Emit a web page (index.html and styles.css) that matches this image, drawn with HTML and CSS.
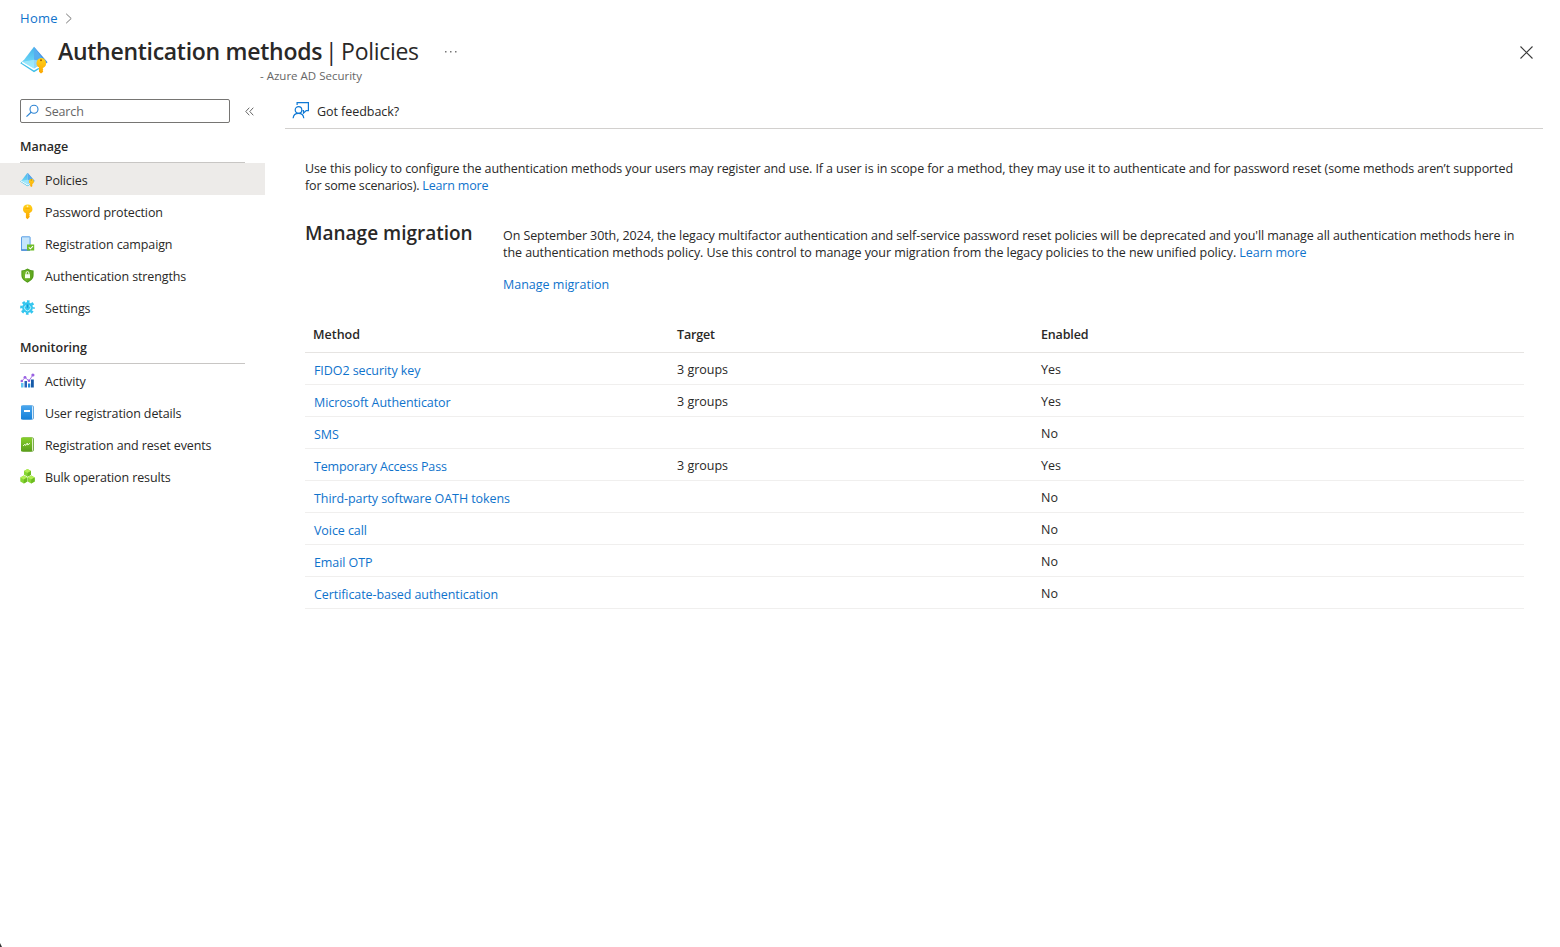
FILE: index.html
```html
<!DOCTYPE html>
<html lang="en">
<head>
<meta charset="utf-8">
<title>Authentication methods | Policies</title>
<link rel="stylesheet" href="styles.css">
</head>
<body>
<svg class="defs" width="0" height="0" aria-hidden="true">
  <defs>
    <linearGradient id="pyr" x1="0" y1="0" x2="0" y2="1"><stop offset="0" stop-color="#45b3ea"/><stop offset="1" stop-color="#7be4fb"/></linearGradient>
    <linearGradient id="gold" x1="0" y1="0" x2="0" y2="1"><stop offset="0" stop-color="#ffd21c"/><stop offset="1" stop-color="#fba500"/></linearGradient>
    <linearGradient id="blue" x1="0" y1="0" x2="0" y2="1"><stop offset="0" stop-color="#4aa7ee"/><stop offset="1" stop-color="#1580d8"/></linearGradient>
    <linearGradient id="green" x1="0" y1="0" x2="0" y2="1"><stop offset="0" stop-color="#86cf2a"/><stop offset="1" stop-color="#5a9e1a"/></linearGradient>
    <symbol id="pyramid" viewBox="0 0 28 28">
      <path d="M3.500 14.200.3 17.300 14 26.200l6-3.800-6-1.400z" fill="#3fbfe9"/>
      <path d="M3 14.500 1.800 17 14 24.600l6-3.700-6-1z" fill="#fff"/>
      <path d="M14 .8 27.600 16.300 21 21z" fill="#3f8fe3"/>
      <path d="M14 .8 2.600 15.800 14 22.600z" fill="url(#pyr)"/>
      <path d="M14 .8 25 15.800 14 22.600z" fill="#57aeee"/>
      <path d="M2.600 15.800 14 13.800l11 2-11 6.800z" fill="#b9f1fd" opacity=".6"/>
      <path d="M21 12a5.200 5.200 0 0 1 2.300 9.800l-.6 1 .6 1-.6 1 .6 1L21 27.500l-2-1.700v-4.200A5.200 5.200 0 0 1 21 12z" fill="url(#gold)"/>
      <circle cx="21" cy="14.200" r="1" fill="#a66700"/>
    </symbol>
  </defs>
</svg>
<nav class="crumb"><a href="#">Home</a>
  <svg width="8" height="11" viewBox="0 0 8 11"><path d="M1.200.8 6.200 5.500 1.200 10.200" fill="none" stroke="#777" stroke-width="1"/></svg>
</nav>
<header class="head">
  <svg class="head-icon" width="28" height="28"><use href="#pyramid"/></svg>
  <div class="titles">
    <h1><b>Authentication methods</b><span class="page">| Policies</span></h1>
    <p class="sub">- Azure AD Security</p>
  </div>
  <svg class="dots" width="12" height="4" viewBox="0 0 12 4"><path d="M0 1h1.500v1.500H0zM5 1h1.500v1.500H5zM10 1h1.500v1.500H10z" fill="#777"/></svg>
  <svg class="close" width="13" height="13" viewBox="0 0 13 13"><path d="M.5.5l12 12M12.500.500l-12 12" fill="none" stroke="#3a3a3a" stroke-width="1.100"/></svg>
</header>
<div class="body">
  <aside class="side">
    <div class="searchrow">
      <div class="search">
        <svg width="14" height="14" viewBox="0 0 14 14"><circle cx="8" cy="5.300" r="4" fill="none" stroke="#2b83d3" stroke-width="1.100"/><path d="M5.100 8.200.5 12.600" stroke="#2b83d3" stroke-width="1.200"/></svg>
        <span>Search</span>
      </div>
      <svg width="9" height="9" viewBox="0 0 9 9"><path d="M4.300.7.8 4.500l3.500 3.800M8.300.7 4.800 4.500l3.500 3.800" fill="none" stroke="#666"/></svg>
    </div>
    <h2 class="group">Manage</h2>
    <ul class="menu">
      <li class="on"><svg width="16" height="16" viewBox="0 0 16 16"><use href="#pyramid" x="0" y=".3" width="15" height="15"/></svg><span>Policies</span></li>
      <li><svg width="16" height="16" viewBox="0 0 16 16"><path d="M7.500.500a4.500 4.500 0 0 1 2.200 8.600l-.5.700.6.900-.6.900.6.900-.6.900-1.700 1.900-1.600-1.500V9.200A4.500 4.500 0 0 1 7.500.5z" fill="url(#gold)"/><path d="M5.400 4.400h4.200" stroke="#f8b000"/><circle cx="7.500" cy="2.300" r=".9" fill="#fff2c0"/></svg><span>Password protection</span></li>
      <li><svg width="16" height="16" viewBox="0 0 16 16"><rect x="1.500" y=".8" width="8.600" height="13.400" rx=".5" fill="#c5e5fb" stroke="#5a9ee5"/><path d="M1 14h9" stroke="#4285d4" stroke-width="1.300"/><rect x="7" y="8.500" width="7.200" height="6" fill="#6fbd28"/><path d="M8.800 11.300l1.600 1.500 2.600-2.600" fill="none" stroke="#fff" stroke-width="1.100"/></svg><span>Registration campaign</span></li>
      <li><svg width="16" height="16" viewBox="0 0 16 16"><path d="M7.500.500C9.500 1.900 11.300 2.300 13.600 2.400V7c0 4-3 6-6.100 7.700C4.400 13 1.400 11 1.400 7V2.400C3.700 2.300 5.500 1.900 7.500.5z" fill="#4f9a18"/><path d="M7.500 1.600c1.700 1.100 3.300 1.500 5.100 1.600V7c0 3.300-2.500 5.100-5.100 6.600z" fill="#62a820"/><path d="M7.500 1.600C5.800 2.700 4.200 3.100 2.400 3.200V7c0 3.300 2.500 5.100 5.100 6.600z" fill="#6fb526"/><rect x="5" y="6.200" width="5" height="4" fill="#f7fff0"/><path d="M6.100 6.400V5a1.400 1.400 0 0 1 2.800 0v1.400" fill="none" stroke="#f7fff0"/></svg><span>Authentication strengths</span></li>
      <li><svg width="16" height="16" viewBox="0 0 16 16"><circle cx="7.500" cy="7.500" r="6.100" fill="none" stroke="#32c5ee" stroke-width="2.400" stroke-dasharray="2.600 2.191" stroke-dashoffset="1.300"/><circle cx="7.500" cy="7.500" r="5.400" fill="#32c5ee"/><path d="M5.500 5.500a3 3 0 1 0 4 0" fill="none" stroke="#c6f4ff"/><path d="M7.500 4.500v3.200" stroke="#1793d2" stroke-width="1.300"/></svg><span>Settings</span></li>
    </ul>
    <h2 class="group">Monitoring</h2>
    <ul class="menu">
      <li><svg width="16" height="16" viewBox="0 0 16 16"><path d="M1 10h2.500v4.500H1z" fill="#60c5f2"/><path d="M4.500 8H7v6.500H4.500z" fill="#2a62b9"/><path d="M8 10.500h2.300v4H8z" fill="#2388d8"/><path d="M11 6.500h2.800v8H11z" fill="#155aa8"/><path d="M1.800 8.200 5 4.500l4 3.300 3.800-5.600" fill="none" stroke="#a878e8"/><g fill="#9a62e2"><circle cx="1.800" cy="8" r="1.300"/><circle cx="5" cy="4.300" r="1.400"/><circle cx="9" cy="7.800" r="1.300"/><circle cx="12.900" cy="2" r="1.600"/></g></svg><span>Activity</span></li>
      <li><svg width="16" height="16" viewBox="0 0 16 16"><rect x="2" y=".8" width="11.500" height="13.400" rx="1" fill="#d8ebfa" stroke="#6aa9dd"/><rect x="1" y=".5" width="11" height="14" rx=".8" fill="url(#blue)"/><path d="M4 5h6v2H4z" fill="#fff"/></svg><span>User registration details</span></li>
      <li><svg width="16" height="16" viewBox="0 0 16 16"><rect x="2" y=".8" width="11.500" height="13.400" rx="1" fill="#dff0c8" stroke="#7cae4e"/><rect x="1" y=".5" width="11" height="14" rx=".8" fill="url(#green)"/><path d="M3 9l2-1.800.6 1.300L7.300 6l.5 2L10 6.200" fill="none" stroke="#e9fbd2"/></svg><span>Registration and reset events</span></li>
      <li><svg width="16" height="16" viewBox="0 0 16 16"><g id="cube"><path d="M7.500 0 11 2v3.800L7.500 7.800 4 5.800V2z" fill="#86d633"/><path d="M4 2l3.500 2L11 2 7.500 0z" fill="#b2ee52"/><path d="M7.500 4 11 2v3.800l-3.500 2z" fill="#6cbb20"/></g><use href="#cube" x="-3.700" y="6.600"/><use href="#cube" x="3.700" y="6.600"/></svg><span>Bulk operation results</span></li>
    </ul>
  </aside>
  <main class="main">
    <div class="toolbar">
      <svg width="17" height="17" viewBox="0 0 17 17"><g fill="none" stroke="#0f78d4" stroke-width="1.200"><circle cx="6.500" cy="8" r="3.300"/><path d="M1.100 16.200c.3-3 2.400-4.900 5.400-4.900s5 1.900 5.300 4.900"/><path d="M5.100 3V.6h11.300v8h-2.200l-2.700 2.600V8.600h-1"/></g></svg>
      <span>Got feedback?</span>
    </div>
    <div class="content">
      <p class="intro">Use this policy to configure the authentication methods your users may register and use. If a user is in scope for a method, they may use it to authenticate and for password reset (some methods aren’t supported<br><span class="second-intro">for some scenarios). <a href="#">Learn more</a></span></p>
      <section class="mig">
        <h3>Manage migration</h3>
        <div class="migtext">
          <p>On September 30th, 2024, the legacy multifactor authentication and self-service password reset policies will be deprecated and you'll manage all authentication methods here in<br><span class="second">the authentication methods policy. Use this control to manage your migration from the legacy policies to the new unified policy. <a href="#">Learn more</a></span></p>
          <p class="miglink"><a href="#">Manage migration</a></p>
        </div>
      </section>
      <table>
        <thead><tr><th>Method</th><th>Target</th><th>Enabled</th></tr></thead>
        <tbody>
          <tr><td><a href="#">FIDO2 security key</a></td><td>3 groups</td><td>Yes</td></tr>
          <tr><td><a href="#">Microsoft Authenticator</a></td><td>3 groups</td><td>Yes</td></tr>
          <tr><td><a href="#">SMS</a></td><td></td><td>No</td></tr>
          <tr><td><a href="#" class="tight">Temporary Access Pass</a></td><td>3 groups</td><td>Yes</td></tr>
          <tr><td><a href="#">Third-party software OATH tokens</a></td><td></td><td>No</td></tr>
          <tr><td><a href="#">Voice call</a></td><td></td><td>No</td></tr>
          <tr><td><a href="#">Email OTP</a></td><td></td><td>No</td></tr>
          <tr><td><a href="#">Certificate-based authentication</a></td><td></td><td>No</td></tr>
        </tbody>
      </table>
    </div>
  </main>
</div>
<svg class="corner" width="2" height="4" viewBox="0 0 2 4"><path d="M0 0 2 4H0z" fill="#333"/></svg>
</body>
</html>
```
FILE: styles.css
```css
* { box-sizing: border-box; }
body { margin: 0; height: 947px; background: #fff; color: #292827; font: 12.5px/17px "Open Sans", "Noto Sans", sans-serif; }
h1, h2, h3, p, ul { margin: 0; padding: 0; }
ul { list-style: none; }
svg { display: block; flex: none; }
a { color: #0f73cc; text-decoration: none; }
.defs { position: absolute; }
.corner { position: absolute; left: 0; bottom: 0; }
.crumb { display: flex; align-items: center; gap: 7px; height: 36px; padding-left: 20px; font-size: 13px; letter-spacing: .3px; }
.head { display: flex; height: 58px; padding-left: 20px; }
.head-icon { margin: 10px 10px 0 0; }
h1 { display: flex; gap: 3px; font-size: 23px; line-height: 31px; font-weight: 400; white-space: nowrap; }
h1 b { font-weight: 600; letter-spacing: -.28px; }
.page { letter-spacing: -.3px; word-spacing: -2px; }
.sub { padding-left: 202px; margin-top: 1px; font-size: 11.5px; line-height: 16px; color: #666; }
.dots { margin: 14px 0 0 26px; }
.close { margin: 10px 27px 0 auto; }
.body { display: flex; }
.side { width: 285px; padding-top: 5px; flex: none; }
.searchrow { display: flex; align-items: center; gap: 15px; padding-left: 20px; }
.search { display: flex; align-items: center; gap: 5px; width: 210px; height: 24px; padding-left: 5px; border: 1px solid #767573; border-radius: 2px; color: #666; letter-spacing: -.15px; }
.group { height: 40px; margin: 0 40px 0 20px; padding-top: 15px; border-bottom: 1px solid #c8c6c4; font-size: 12.5px; line-height: 17px; font-weight: 600; }
.menu li { display: flex; align-items: center; gap: 9px; width: 265px; height: 32px; padding-left: 20px; letter-spacing: -.12px; }
.menu li svg { margin-top: 1px; }
.menu li span { padding-top: 2px; }
.menu li.on { background: #edebe9; }
.menu + .group { height: 41px; padding-top: 16px; }
.main { width: 1258px; }
.toolbar { display: flex; align-items: center; gap: 8px; height: 35px; padding: 0 0 1px 7px; border-bottom: 1px solid #d2d0ce; letter-spacing: -.05px; }
.toolbar span { padding-top: 2px; }
.content { padding: 31px 18px 0 20px; }
.intro, .migtext p { white-space: nowrap; }
.intro { letter-spacing: -.098px; }
.second-intro { letter-spacing: -.17px; }
.mig { display: flex; margin-top: 26px; height: 96px; }
.mig h3 { flex: none; width: 198px; font-size: 19px; line-height: 26px; font-weight: 600; }
.migtext { padding-top: 7px; letter-spacing: -.086px; }
.second { letter-spacing: -.064px; }
.miglink { margin-top: 15px; letter-spacing: 0; }
table { width: 1219px; table-layout: fixed; border-collapse: collapse; }
th, td { width: 364px; height: 32px; padding: 2px 0 0 8px; text-align: left; border-bottom: 1px solid #f0efee; }
th { height: 36px; font-weight: 600; border-color: #e6e4e2; letter-spacing: -.15px; }
th:first-child { letter-spacing: 0; }
th:last-child { width: auto; }
td:first-child { padding: 4px 0 0 9px; letter-spacing: -.08px; }
.tight { letter-spacing: -.14px; }
```
